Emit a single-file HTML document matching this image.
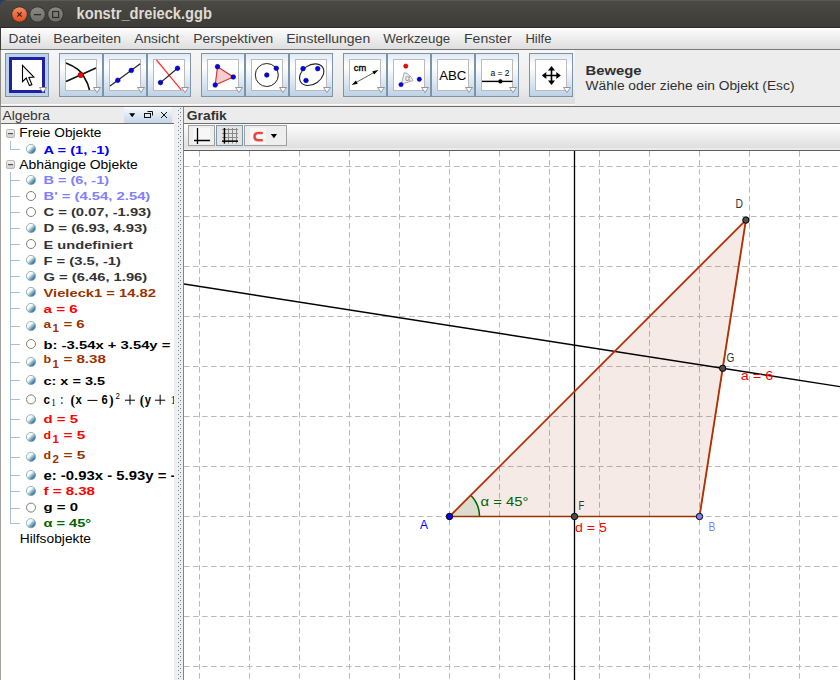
<!DOCTYPE html>
<html><head><meta charset="utf-8"><style>
html,body{margin:0;padding:0;background:#fff;overflow:hidden;}
svg{display:block;}
</style></head><body>
<svg width="840" height="680" viewBox="0 0 840 680">

<defs>
<linearGradient id="gTitle" x1="0" y1="0" x2="0" y2="1"><stop offset="0" stop-color="#4b4a45"/><stop offset="1" stop-color="#3c3b37"/></linearGradient>
<linearGradient id="gMenu" x1="0" y1="0" x2="0" y2="1"><stop offset="0" stop-color="#fdfdfd"/><stop offset="1" stop-color="#dedede"/></linearGradient>
<linearGradient id="gClose" x1="0" y1="0" x2="0" y2="1"><stop offset="0" stop-color="#f58a62"/><stop offset="1" stop-color="#e2501d"/></linearGradient>
<linearGradient id="gWin" x1="0" y1="0" x2="0" y2="1"><stop offset="0" stop-color="#8a8984"/><stop offset="1" stop-color="#6e6d69"/></linearGradient>
<linearGradient id="gBtn" x1="0" y1="0" x2="0" y2="1"><stop offset="0" stop-color="#dfe8f1"/><stop offset="0.3" stop-color="#ffffff"/><stop offset="1" stop-color="#bcd1e6"/></linearGradient>
<linearGradient id="gTb" x1="0" y1="0" x2="0" y2="1"><stop offset="0" stop-color="#f6f6f6"/><stop offset="0.7" stop-color="#ebebeb"/><stop offset="1" stop-color="#dcdcdc"/></linearGradient>
<linearGradient id="gHdrBtn" x1="0" y1="0" x2="0" y2="1"><stop offset="0" stop-color="#f8fbfd"/><stop offset="1" stop-color="#c3d6ea"/></linearGradient>
<linearGradient id="gGtb" x1="0" y1="0" x2="0" y2="1"><stop offset="0" stop-color="#fefefe"/><stop offset="1" stop-color="#dcdcdc"/></linearGradient>
<linearGradient id="gCollapse" x1="0" y1="0" x2="0" y2="1"><stop offset="0" stop-color="#f4f4f4"/><stop offset="1" stop-color="#cfcfcf"/></linearGradient>
<linearGradient id="gBall" x1="0.15" y1="0.15" x2="0.85" y2="0.85"><stop offset="0" stop-color="#ffffff"/><stop offset="0.35" stop-color="#f4f8f4"/><stop offset="0.5" stop-color="#b9d3c4"/><stop offset="0.75" stop-color="#5f97c2"/><stop offset="1" stop-color="#2c5d8e"/></linearGradient>
<clipPath id="clipAlg"><rect x="0" y="124" width="174" height="556"/></clipPath>
<pattern id="pDots" x="174" y="0" width="9" height="4" patternUnits="userSpaceOnUse"><rect x="0" y="0" width="9" height="4" fill="#eeeeee"/><rect x="4" y="2" width="1" height="1" fill="#71839a"/><rect x="6" y="0" width="1" height="1" fill="#71839a"/></pattern>
</defs>

<rect x="0" y="0" width="840" height="680" fill="#ffffff"/>
<rect x="0" y="0" width="840" height="28" fill="#1e3e6b"/>
<path d="M0,28 L0,6 A6,6 0 0 1 6,0 L840,0 L840,28 Z" fill="url(#gTitle)"/>
<rect x="0" y="27" width="840" height="1" fill="#2c2b28"/>
<rect x="6" y="0" width="834" height="1" fill="#5a5954"/>
<circle cx="19.5" cy="14.5" r="7.9" fill="#2e2d2a"/>
<circle cx="19.5" cy="14.5" r="7.3" fill="url(#gClose)"/>
<path d="M17.3,12.3 L21.7,16.7 M21.7,12.3 L17.3,16.7" stroke="#3a1a0e" stroke-width="1.1"/>
<circle cx="37.5" cy="14.5" r="7.9" fill="#2e2d2a"/>
<circle cx="37.5" cy="14.5" r="7.3" fill="url(#gWin)"/>
<rect x="34" y="14" width="7" height="1.3" fill="#2f2e2b"/>
<circle cx="55.5" cy="14.5" r="7.9" fill="#2e2d2a"/>
<circle cx="55.5" cy="14.5" r="7.3" fill="url(#gWin)"/>
<rect x="52.6" y="11.5" width="6" height="6" fill="none" stroke="#2f2e2b" stroke-width="1.2"/>
<text x="76.5" y="18.9" font-size="16.5" font-weight="bold" fill="#dfdbd2" font-family='"Liberation Sans", sans-serif' textLength="135.5" lengthAdjust="spacingAndGlyphs" >konstr_dreieck.ggb</text>
<rect x="0" y="28" width="840" height="21" fill="url(#gMenu)"/>
<rect x="0" y="49" width="840" height="1" fill="#7a7a7a"/>
<text x="8.5" y="42.6" font-size="12" font-weight="normal" fill="#3c3c3c" font-family='"Liberation Sans", sans-serif' textLength="32.2" lengthAdjust="spacingAndGlyphs" >Datei</text>
<text x="53.3" y="42.6" font-size="12" font-weight="normal" fill="#3c3c3c" font-family='"Liberation Sans", sans-serif' textLength="67.7" lengthAdjust="spacingAndGlyphs" >Bearbeiten</text>
<text x="134.3" y="42.6" font-size="12" font-weight="normal" fill="#3c3c3c" font-family='"Liberation Sans", sans-serif' textLength="45" lengthAdjust="spacingAndGlyphs" >Ansicht</text>
<text x="193.3" y="42.6" font-size="12" font-weight="normal" fill="#3c3c3c" font-family='"Liberation Sans", sans-serif' textLength="80" lengthAdjust="spacingAndGlyphs" >Perspektiven</text>
<text x="286.2" y="42.6" font-size="12" font-weight="normal" fill="#3c3c3c" font-family='"Liberation Sans", sans-serif' textLength="84" lengthAdjust="spacingAndGlyphs" >Einstellungen</text>
<text x="383.2" y="42.6" font-size="12" font-weight="normal" fill="#3c3c3c" font-family='"Liberation Sans", sans-serif' textLength="67" lengthAdjust="spacingAndGlyphs" >Werkzeuge</text>
<text x="464" y="42.6" font-size="12" font-weight="normal" fill="#3c3c3c" font-family='"Liberation Sans", sans-serif' textLength="47.6" lengthAdjust="spacingAndGlyphs" >Fenster</text>
<text x="525.4" y="42.6" font-size="12" font-weight="normal" fill="#3c3c3c" font-family='"Liberation Sans", sans-serif' textLength="26" lengthAdjust="spacingAndGlyphs" >Hilfe</text>
<rect x="0" y="50" width="840" height="56" fill="#ededed"/>
<rect x="0" y="50" width="575" height="54" fill="url(#gTb)"/>
<rect x="0" y="104" width="575" height="1" fill="#fafafa"/>
<rect x="0" y="106" width="840" height="1" fill="#6a6a6a"/>
<rect x="5.5" y="53.5" width="43" height="43" fill="#bcd2e8" stroke="#7d93a8" stroke-width="1"/>
<rect x="59.5" y="53.5" width="43" height="43" fill="url(#gBtn)" stroke="#7d93a8" stroke-width="1"/>
<rect x="65.5" y="59.5" width="31" height="31" fill="#ffffff" stroke="#bababa" stroke-width="1"/>
<rect x="103.5" y="53.5" width="43" height="43" fill="url(#gBtn)" stroke="#7d93a8" stroke-width="1"/>
<rect x="109.5" y="59.5" width="31" height="31" fill="#ffffff" stroke="#bababa" stroke-width="1"/>
<rect x="147.5" y="53.5" width="43" height="43" fill="url(#gBtn)" stroke="#7d93a8" stroke-width="1"/>
<rect x="153.5" y="59.5" width="31" height="31" fill="#ffffff" stroke="#bababa" stroke-width="1"/>
<rect x="201.5" y="53.5" width="43" height="43" fill="url(#gBtn)" stroke="#7d93a8" stroke-width="1"/>
<rect x="207.5" y="59.5" width="31" height="31" fill="#ffffff" stroke="#bababa" stroke-width="1"/>
<rect x="245.5" y="53.5" width="43" height="43" fill="url(#gBtn)" stroke="#7d93a8" stroke-width="1"/>
<rect x="251.5" y="59.5" width="31" height="31" fill="#ffffff" stroke="#bababa" stroke-width="1"/>
<rect x="289.5" y="53.5" width="43" height="43" fill="url(#gBtn)" stroke="#7d93a8" stroke-width="1"/>
<rect x="295.5" y="59.5" width="31" height="31" fill="#ffffff" stroke="#bababa" stroke-width="1"/>
<rect x="343.5" y="53.5" width="43" height="43" fill="url(#gBtn)" stroke="#7d93a8" stroke-width="1"/>
<rect x="349.5" y="59.5" width="31" height="31" fill="#ffffff" stroke="#bababa" stroke-width="1"/>
<rect x="387.5" y="53.5" width="43" height="43" fill="url(#gBtn)" stroke="#7d93a8" stroke-width="1"/>
<rect x="393.5" y="59.5" width="31" height="31" fill="#ffffff" stroke="#bababa" stroke-width="1"/>
<rect x="431.5" y="53.5" width="43" height="43" fill="url(#gBtn)" stroke="#7d93a8" stroke-width="1"/>
<rect x="437.5" y="59.5" width="31" height="31" fill="#ffffff" stroke="#bababa" stroke-width="1"/>
<rect x="475.5" y="53.5" width="43" height="43" fill="url(#gBtn)" stroke="#7d93a8" stroke-width="1"/>
<rect x="481.5" y="59.5" width="31" height="31" fill="#ffffff" stroke="#bababa" stroke-width="1"/>
<rect x="529.5" y="53.5" width="43" height="43" fill="url(#gBtn)" stroke="#7d93a8" stroke-width="1"/>
<rect x="535.5" y="59.5" width="31" height="31" fill="#ffffff" stroke="#bababa" stroke-width="1"/>
<rect x="10.5" y="58.5" width="33" height="33" fill="#ffffff" stroke="#2020a2" stroke-width="3"/>
<path d="M22.5,65.3 L22.5,81.6 L26.2,78 L29.4,85.6 L31.9,84.6 L28.9,77.4 L33.9,77 Z" fill="#ffffff" stroke="#000" stroke-width="1.1" stroke-linejoin="miter"/>
<path d="M39.5,87.5 L46.5,87.5 L43,92.5 Z" fill="#ffffff" stroke="#8a8a8a" stroke-width="0.9"/>
<path d="M66,63 Q81,69 84,77 Q88,83 89.5,90" fill="none" stroke="#111" stroke-width="1.6"/>
<path d="M66,81.5 L96,68" fill="none" stroke="#111" stroke-width="1.6"/>
<circle cx="80.8" cy="75" r="2.7" fill="#ff0000" stroke="#550000" stroke-width="0.6"/>
<path d="M93.5,87.5 L100.5,87.5 L97,92.5 Z" fill="#ffffff" stroke="#8a8a8a" stroke-width="0.9"/>
<path d="M110,86 L140.2,63.8" stroke="#222" stroke-width="1.2"/>
<circle cx="117.8" cy="80.3" r="2.35" fill="#0000ff" stroke="#000033" stroke-width="0.5"/>
<circle cx="131.3" cy="70.4" r="2.35" fill="#0000ff" stroke="#000033" stroke-width="0.5"/>
<path d="M137.5,87.5 L144.5,87.5 L141,92.5 Z" fill="#ffffff" stroke="#8a8a8a" stroke-width="0.9"/>
<path d="M156.5,60 L181.2,89.8" stroke="#ff3030" stroke-width="1.2"/>
<path d="M160.5,82.6 L177.5,68.3" stroke="#222" stroke-width="1.2"/>
<circle cx="160.5" cy="82.6" r="2.35" fill="#0000ff" stroke="#000033" stroke-width="0.5"/>
<circle cx="177.5" cy="68.3" r="2.35" fill="#0000ff" stroke="#000033" stroke-width="0.5"/>
<path d="M181.5,87.5 L188.5,87.5 L185,92.5 Z" fill="#ffffff" stroke="#8a8a8a" stroke-width="0.9"/>
<path d="M217.5,66.7 L233.3,77 L215.2,85 Z" fill="#f2d0d0" stroke="#e03030" stroke-width="1.2"/>
<circle cx="217.5" cy="66.7" r="2.35" fill="#0000ff" stroke="#000033" stroke-width="0.5"/>
<circle cx="233.3" cy="77" r="2.35" fill="#0000ff" stroke="#000033" stroke-width="0.5"/>
<circle cx="215.2" cy="85" r="2.35" fill="#0000ff" stroke="#000033" stroke-width="0.5"/>
<path d="M235.5,87.5 L242.5,87.5 L239,92.5 Z" fill="#ffffff" stroke="#8a8a8a" stroke-width="0.9"/>
<circle cx="266.8" cy="75" r="11.5" fill="none" stroke="#222" stroke-width="1"/>
<circle cx="266.8" cy="75" r="2.35" fill="#0000ff" stroke="#000033" stroke-width="0.5"/>
<circle cx="276.3" cy="68.3" r="2.35" fill="#0000ff" stroke="#000033" stroke-width="0.5"/>
<path d="M279.5,87.5 L286.5,87.5 L283,92.5 Z" fill="#ffffff" stroke="#8a8a8a" stroke-width="0.9"/>
<ellipse cx="311.7" cy="74.7" rx="13.2" ry="9.5" transform="rotate(-35 311.7 74.7)" fill="none" stroke="#222" stroke-width="1.1"/>
<circle cx="303" cy="68.7" r="2.35" fill="#0000ff" stroke="#000033" stroke-width="0.5"/>
<circle cx="317.7" cy="68.7" r="2.35" fill="#0000ff" stroke="#000033" stroke-width="0.5"/>
<circle cx="306" cy="80.5" r="2.35" fill="#0000ff" stroke="#000033" stroke-width="0.5"/>
<path d="M323.5,87.5 L330.5,87.5 L327,92.5 Z" fill="#ffffff" stroke="#8a8a8a" stroke-width="0.9"/>
<text x="353.8" y="71" font-size="9.5" font-weight="normal" fill="#000" font-family='"Liberation Sans", sans-serif' textLength="12.4" lengthAdjust="spacingAndGlyphs" stroke="#000" stroke-width="0.35">cm</text>
<path d="M355,83.1 L375,71.9" stroke="#333" stroke-width="0.8"/>
<path d="M351.6,85 L357.8,83.7 L355.9,80.5 Z M378.4,70 L374.1,74.5 L372.3,71.3 Z" fill="#000"/>
<path d="M377.5,87.5 L384.5,87.5 L381,92.5 Z" fill="#ffffff" stroke="#8a8a8a" stroke-width="0.9"/>
<path d="M401.5,84 L404.2,72.6 A12.5,12.5 0 0 1 412.9,80.6 Z" fill="#f2f2f2" stroke="#a8a8a8" stroke-width="1"/>
<text x="405" y="81.3" font-size="8.5" font-weight="normal" fill="#8a8a8a" font-family='"Liberation Sans", sans-serif' textLength="5.2" lengthAdjust="spacingAndGlyphs" >α</text>
<circle cx="405.8" cy="66.1" r="2.2" fill="#ff0000" stroke="#440000" stroke-width="0.4"/>
<circle cx="401" cy="84.6" r="2.2" fill="#0000ff" stroke="#000044" stroke-width="0.4"/>
<circle cx="419.3" cy="79.2" r="2.2" fill="#0000ff" stroke="#000044" stroke-width="0.4"/>
<path d="M421.5,87.5 L428.5,87.5 L425,92.5 Z" fill="#ffffff" stroke="#8a8a8a" stroke-width="0.9"/>
<text x="439.2" y="79.7" font-size="13.3" font-weight="normal" fill="#000" font-family='"Liberation Sans", sans-serif' textLength="27.2" lengthAdjust="spacingAndGlyphs" >ABC</text>
<path d="M465.5,87.5 L472.5,87.5 L469,92.5 Z" fill="#ffffff" stroke="#8a8a8a" stroke-width="0.9"/>
<text x="490.5" y="75.8" font-size="9" font-weight="normal" fill="#000" font-family='"Liberation Sans", sans-serif' textLength="19" lengthAdjust="spacingAndGlyphs" >a = 2</text>
<rect x="482" y="80.7" width="30.5" height="1.4" fill="#000"/>
<circle cx="500.4" cy="81.4" r="2.1" fill="#000"/>
<path d="M509.5,87.5 L516.5,87.5 L513,92.5 Z" fill="#ffffff" stroke="#8a8a8a" stroke-width="0.9"/>
<path d="M551.5,68 L551.5,83 M544,75.5 L559,75.5" stroke="#000" stroke-width="1.6"/>
<path d="M551.5,66 L548,70.5 L555,70.5 Z M551.5,85.1 L548,80.6 L555,80.6 Z M541.8,75.5 L546.3,72 L546.3,79 Z M560.8,75.5 L556.3,72 L556.3,79 Z" fill="#000"/>
<path d="M563.5,87.5 L570.5,87.5 L567,92.5 Z" fill="#ffffff" stroke="#8a8a8a" stroke-width="0.9"/>
<text x="585.5" y="75" font-size="12" font-weight="bold" fill="#303030" font-family='"Liberation Sans", sans-serif' textLength="56" lengthAdjust="spacingAndGlyphs" >Bewege</text>
<text x="585.5" y="89.8" font-size="12" font-weight="normal" fill="#303030" font-family='"Liberation Sans", sans-serif' textLength="209" lengthAdjust="spacingAndGlyphs" >Wähle oder ziehe ein Objekt (Esc)</text>
<rect x="0" y="107" width="840" height="16" fill="#ececec"/>
<rect x="1" y="123" width="173" height="1" fill="#6e6e6e"/>
<rect x="124" y="107" width="48" height="16" fill="url(#gHdrBtn)"/>
<text x="2.5" y="120" font-size="12.5" font-weight="normal" fill="#333" font-family='"Liberation Sans", sans-serif' textLength="47.5" lengthAdjust="spacingAndGlyphs" >Algebra</text>
<path d="M129.2,113.2 L135.2,113.2 L132.2,117.2 Z" fill="#000"/>
<rect x="144.5" y="113.5" width="6" height="4" fill="none" stroke="#111" stroke-width="1"/>
<path d="M147.5,111.5 L152.5,111.5 L152.5,115.5" fill="none" stroke="#111" stroke-width="1"/>
<path d="M161,112 L167,118 M167,112 L161,118" stroke="#111" stroke-width="1"/>
<rect x="174" y="107" width="9" height="573" fill="url(#pDots)"/>
<rect x="183" y="107" width="1" height="573" fill="#74889c"/>
<text x="186.8" y="119.5" font-size="12.5" font-weight="bold" fill="#333" font-family='"Liberation Sans", sans-serif' textLength="40" lengthAdjust="spacingAndGlyphs" >Grafik</text>
<rect x="184" y="124" width="656" height="26" fill="url(#gGtb)"/>
<rect x="184" y="123" width="656" height="1" fill="#6e6e6e"/>
<rect x="184" y="148" width="656" height="2" fill="#ebebeb"/>
<rect x="184" y="150" width="656" height="1" fill="#5e5e5e"/>
<rect x="188.5" y="125.5" width="26" height="20" fill="#eeeeee" stroke="#a0a0a0" stroke-width="1"/>
<rect x="193.5" y="128" width="16.5" height="15.8" fill="#f7f7f7"/>
<path d="M197.5,128 L197.5,144 M194,140.5 L210,140.5" stroke="#000" stroke-width="1.3"/>
<rect x="216.5" y="125.5" width="26" height="20" fill="#e4e4e4" stroke="#7f97ad" stroke-width="1"/>
<rect x="228.0" y="128" width="1" height="15.5" fill="#8a8a8a"/>
<rect x="232.0" y="128" width="1" height="15.5" fill="#8a8a8a"/>
<rect x="236.0" y="128" width="1" height="15.5" fill="#8a8a8a"/>
<rect x="222" y="129.0" width="16" height="1" fill="#8a8a8a"/>
<rect x="222" y="133.0" width="16" height="1" fill="#8a8a8a"/>
<rect x="222" y="137.0" width="16" height="1" fill="#8a8a8a"/>
<rect x="223.7" y="128" width="1.5" height="15.6" fill="#000"/>
<rect x="222" y="140.4" width="16" height="1.5" fill="#000"/>
<rect x="244.5" y="125.5" width="42" height="20" fill="#eeeeee" stroke="#a0a0a0" stroke-width="1"/>
<rect x="250" y="128" width="16" height="16" fill="#f7f7f7"/>
<path d="M261.8,133 L258.2,133 Q254.5,133 254.5,136.6 Q254.5,140.2 258.2,140.2 L261.8,140.2" fill="none" stroke="#e84848" stroke-width="2.5" stroke-linecap="round"/>
<path d="M270.8,134 L277,134 L273.9,138.2 Z" fill="#000"/>
<rect x="0" y="124" width="174" height="556" fill="#ffffff"/>
<rect x="0" y="28" width="1" height="22" fill="#3c3b37"/>
<rect x="0" y="50" width="1" height="57" fill="#8a8a86"/>
<rect x="0" y="107" width="1" height="573" fill="#a3a09a"/>
<rect x="1" y="28" width="839" height="1" fill="#ffffff" fill-opacity="0.7"/>
<rect x="6.5" y="129.5" width="8" height="8" rx="1.5" fill="url(#gCollapse)" stroke="#b8b8b8" stroke-width="1"/>
<rect x="8" y="133" width="5" height="1.2" fill="#555"/>
<text x="19.3" y="137.4" font-size="12" font-weight="normal" fill="#000" font-family='"Liberation Sans", sans-serif' textLength="82.1" lengthAdjust="spacingAndGlyphs" >Freie Objekte</text>
<rect x="6.5" y="160.5" width="8" height="8" rx="1.5" fill="url(#gCollapse)" stroke="#b8b8b8" stroke-width="1"/>
<rect x="8" y="164" width="5" height="1.2" fill="#555"/>
<text x="19.3" y="168.6" font-size="12" font-weight="normal" fill="#000" font-family='"Liberation Sans", sans-serif' textLength="118.5" lengthAdjust="spacingAndGlyphs" >Abhängige Objekte</text>
<text x="19.7" y="542.5" font-size="12" font-weight="normal" fill="#000" font-family='"Liberation Sans", sans-serif' textLength="71.3" lengthAdjust="spacingAndGlyphs" >Hilfsobjekte</text>
<rect x="10" y="141" width="1" height="9" fill="#a9bfd6"/>
<rect x="10" y="149" width="10" height="1" fill="#a9bfd6"/>
<rect x="10" y="172" width="1" height="352" fill="#a9bfd6"/>
<circle cx="31" cy="149" r="4.6" fill="url(#gBall)" stroke="#7fa2bf" stroke-width="0.8"/>
<text x="43.5" y="153.9" font-size="11.6" font-weight="bold" fill="#0000ff" font-family='"Liberation Sans", sans-serif' textLength="65.8" lengthAdjust="spacingAndGlyphs" >A = (1, -1)</text>
<rect x="11" y="180" width="9" height="1" fill="#a9bfd6"/>
<circle cx="31" cy="180" r="4.6" fill="url(#gBall)" stroke="#7fa2bf" stroke-width="0.8"/>
<text x="43.5" y="184.3" font-size="11.6" font-weight="bold" fill="#7f7fff" font-family='"Liberation Sans", sans-serif' textLength="65.5" lengthAdjust="spacingAndGlyphs" >B = (6, -1)</text>
<rect x="11" y="196" width="9" height="1" fill="#a9bfd6"/>
<circle cx="31" cy="196" r="4.5" fill="#ffffff" stroke="#80806c" stroke-width="1"/>
<text x="43.5" y="200.3" font-size="11.6" font-weight="bold" fill="#7f7fff" font-family='"Liberation Sans", sans-serif' textLength="106.8" lengthAdjust="spacingAndGlyphs" >B' = (4.54, 2.54)</text>
<rect x="11" y="212" width="9" height="1" fill="#a9bfd6"/>
<circle cx="31" cy="212" r="4.5" fill="#ffffff" stroke="#80806c" stroke-width="1"/>
<text x="43.5" y="216.4" font-size="11.6" font-weight="bold" fill="#333333" font-family='"Liberation Sans", sans-serif' textLength="107.7" lengthAdjust="spacingAndGlyphs" >C = (0.07, -1.93)</text>
<rect x="11" y="228" width="9" height="1" fill="#a9bfd6"/>
<circle cx="31" cy="228" r="4.6" fill="url(#gBall)" stroke="#7fa2bf" stroke-width="0.8"/>
<text x="43.5" y="232.4" font-size="11.6" font-weight="bold" fill="#333333" font-family='"Liberation Sans", sans-serif' textLength="103.7" lengthAdjust="spacingAndGlyphs" >D = (6.93, 4.93)</text>
<rect x="11" y="244" width="9" height="1" fill="#a9bfd6"/>
<circle cx="31" cy="244" r="4.5" fill="#ffffff" stroke="#80806c" stroke-width="1"/>
<text x="43.5" y="248.5" font-size="11.6" font-weight="bold" fill="#333333" font-family='"Liberation Sans", sans-serif' textLength="89.5" lengthAdjust="spacingAndGlyphs" >E undefiniert</text>
<rect x="11" y="260" width="9" height="1" fill="#a9bfd6"/>
<circle cx="31" cy="260" r="4.6" fill="url(#gBall)" stroke="#7fa2bf" stroke-width="0.8"/>
<text x="43.5" y="264.6" font-size="11.6" font-weight="bold" fill="#333333" font-family='"Liberation Sans", sans-serif' textLength="77.5" lengthAdjust="spacingAndGlyphs" >F = (3.5, -1)</text>
<rect x="11" y="276" width="9" height="1" fill="#a9bfd6"/>
<circle cx="31" cy="276" r="4.6" fill="url(#gBall)" stroke="#7fa2bf" stroke-width="0.8"/>
<text x="43.5" y="280.6" font-size="11.6" font-weight="bold" fill="#333333" font-family='"Liberation Sans", sans-serif' textLength="103.7" lengthAdjust="spacingAndGlyphs" >G = (6.46, 1.96)</text>
<rect x="11" y="292" width="9" height="1" fill="#a9bfd6"/>
<circle cx="31" cy="292" r="4.6" fill="url(#gBall)" stroke="#7fa2bf" stroke-width="0.8"/>
<text x="43.5" y="296.7" font-size="11.6" font-weight="bold" fill="#993300" font-family='"Liberation Sans", sans-serif' textLength="112.4" lengthAdjust="spacingAndGlyphs" >Vieleck1 = 14.82</text>
<rect x="11" y="308" width="9" height="1" fill="#a9bfd6"/>
<circle cx="31" cy="308" r="4.6" fill="url(#gBall)" stroke="#7fa2bf" stroke-width="0.8"/>
<text x="43.5" y="312.8" font-size="11.6" font-weight="bold" fill="#ff0000" font-family='"Liberation Sans", sans-serif' textLength="34.2" lengthAdjust="spacingAndGlyphs" >a = 6</text>
<rect x="11" y="326" width="9" height="1" fill="#a9bfd6"/>
<circle cx="31" cy="326" r="4.6" fill="url(#gBall)" stroke="#7fa2bf" stroke-width="0.8"/>
<text x="43.5" y="327.6" font-size="11.6" font-weight="bold" fill="#993300" font-family='"Liberation Sans", sans-serif' textLength="7.6" lengthAdjust="spacingAndGlyphs" >a</text>
<text x="52.6" y="332.40000000000003" font-size="10.5" font-weight="bold" fill="#993300" font-family='"Liberation Sans", sans-serif' textLength="6.4" lengthAdjust="spacingAndGlyphs" >1</text>
<text x="63.4" y="327.6" font-size="11.6" font-weight="bold" fill="#993300" font-family='"Liberation Sans", sans-serif' textLength="21.3" lengthAdjust="spacingAndGlyphs" > = 6</text>
<rect x="11" y="344" width="9" height="1" fill="#a9bfd6"/>
<circle cx="31" cy="344" r="4.5" fill="#ffffff" stroke="#80806c" stroke-width="1"/>
<text x="43.5" y="349" font-size="11.6" font-weight="bold" fill="#000000" font-family='"Liberation Sans", sans-serif' textLength="126.9" lengthAdjust="spacingAndGlyphs" >b: -3.54x + 3.54y =</text>
<rect x="11" y="362" width="9" height="1" fill="#a9bfd6"/>
<circle cx="31" cy="362" r="4.6" fill="url(#gBall)" stroke="#7fa2bf" stroke-width="0.8"/>
<text x="43.5" y="363.1" font-size="11.6" font-weight="bold" fill="#993300" font-family='"Liberation Sans", sans-serif' textLength="7.6" lengthAdjust="spacingAndGlyphs" >b</text>
<text x="52.6" y="368.1" font-size="10.5" font-weight="bold" fill="#993300" font-family='"Liberation Sans", sans-serif' textLength="6.4" lengthAdjust="spacingAndGlyphs" >1</text>
<text x="63.4" y="363.1" font-size="11.6" font-weight="bold" fill="#993300" font-family='"Liberation Sans", sans-serif' textLength="42.5" lengthAdjust="spacingAndGlyphs" > = 8.38</text>
<rect x="11" y="380" width="9" height="1" fill="#a9bfd6"/>
<circle cx="31" cy="380" r="4.6" fill="url(#gBall)" stroke="#7fa2bf" stroke-width="0.8"/>
<text x="43.5" y="384.6" font-size="11.6" font-weight="bold" fill="#000000" font-family='"Liberation Sans", sans-serif' textLength="61.5" lengthAdjust="spacingAndGlyphs" >c: x = 3.5</text>
<rect x="11" y="399" width="9" height="1" fill="#a9bfd6"/>
<circle cx="31" cy="399.4" r="4.5" fill="#ffffff" stroke="#80806c" stroke-width="1"/>
<g clip-path="url(#clipAlg)">
<text x="43.5" y="404.3" font-size="12" font-weight="bold" fill="#000" font-family='"Liberation Sans", sans-serif' textLength="6.5" lengthAdjust="spacingAndGlyphs" >c</text>
<text x="51.2" y="406.3" font-size="10" font-weight="normal" fill="#000" font-family='"Liberation Serif", serif' textLength="4.6" lengthAdjust="spacingAndGlyphs" >1</text>
<text x="60.6" y="404.3" font-size="12" font-weight="bold" fill="#000" font-family='"Liberation Sans", sans-serif' textLength="2.6" lengthAdjust="spacingAndGlyphs" >:</text>
<text x="70.5" y="404.8" font-size="14.5" font-weight="bold" fill="#000" font-family='"Liberation Serif", serif' textLength="4.6" lengthAdjust="spacingAndGlyphs" >(</text>
<text x="75.6" y="404.3" font-size="12" font-weight="bold" fill="#000" font-family='"Liberation Sans", sans-serif' textLength="6.3" lengthAdjust="spacingAndGlyphs" >x</text>
<rect x="87.5" y="399.90000000000003" width="10" height="1" fill="#000"/>
<text x="101.5" y="404.3" font-size="12" font-weight="bold" fill="#000" font-family='"Liberation Sans", sans-serif' textLength="6.2" lengthAdjust="spacingAndGlyphs" >6</text>
<text x="108.9" y="404.8" font-size="14.5" font-weight="bold" fill="#000" font-family='"Liberation Serif", serif' textLength="4.6" lengthAdjust="spacingAndGlyphs" >)</text>
<text x="115.6" y="398.8" font-size="9" font-weight="normal" fill="#000" font-family='"Liberation Sans", sans-serif' textLength="4.4" lengthAdjust="spacingAndGlyphs" >2</text>
<rect x="125" y="399.7" width="10" height="1" fill="#000"/><rect x="129.5" y="394.7" width="1" height="10" fill="#000"/>
<text x="139.8" y="404.8" font-size="14.5" font-weight="bold" fill="#000" font-family='"Liberation Serif", serif' textLength="4.6" lengthAdjust="spacingAndGlyphs" >(</text>
<text x="144.8" y="404.3" font-size="12" font-weight="bold" fill="#000" font-family='"Liberation Sans", sans-serif' textLength="6.2" lengthAdjust="spacingAndGlyphs" >y</text>
<rect x="155" y="399.7" width="10.3" height="1" fill="#000"/><rect x="159.65" y="394.7" width="1" height="10" fill="#000"/>
<text x="170.5" y="404.3" font-size="12" font-weight="normal" fill="#000" font-family='"Liberation Serif", serif' textLength="6" lengthAdjust="spacingAndGlyphs" >1</text>
</g>
<rect x="11" y="419" width="9" height="1" fill="#a9bfd6"/>
<circle cx="31" cy="419.3" r="4.6" fill="url(#gBall)" stroke="#7fa2bf" stroke-width="0.8"/>
<text x="43.5" y="423.1" font-size="11.6" font-weight="bold" fill="#ff0000" font-family='"Liberation Sans", sans-serif' textLength="34.5" lengthAdjust="spacingAndGlyphs" >d = 5</text>
<rect x="11" y="437" width="9" height="1" fill="#a9bfd6"/>
<circle cx="31" cy="437" r="4.6" fill="url(#gBall)" stroke="#7fa2bf" stroke-width="0.8"/>
<text x="43.5" y="438.6" font-size="11.6" font-weight="bold" fill="#ff0000" font-family='"Liberation Sans", sans-serif' textLength="7.6" lengthAdjust="spacingAndGlyphs" >d</text>
<text x="52.6" y="443.40000000000003" font-size="10.5" font-weight="bold" fill="#ff0000" font-family='"Liberation Sans", sans-serif' textLength="6.4" lengthAdjust="spacingAndGlyphs" >1</text>
<text x="63.4" y="438.6" font-size="11.6" font-weight="bold" fill="#ff0000" font-family='"Liberation Sans", sans-serif' textLength="21.9" lengthAdjust="spacingAndGlyphs" > = 5</text>
<rect x="11" y="457" width="9" height="1" fill="#a9bfd6"/>
<circle cx="31" cy="456.8" r="4.6" fill="url(#gBall)" stroke="#7fa2bf" stroke-width="0.8"/>
<text x="43.5" y="458.5" font-size="11.6" font-weight="bold" fill="#993300" font-family='"Liberation Sans", sans-serif' textLength="7.6" lengthAdjust="spacingAndGlyphs" >d</text>
<text x="52.6" y="463.3" font-size="10.5" font-weight="bold" fill="#993300" font-family='"Liberation Sans", sans-serif' textLength="6.4" lengthAdjust="spacingAndGlyphs" >2</text>
<text x="63.4" y="458.5" font-size="11.6" font-weight="bold" fill="#993300" font-family='"Liberation Sans", sans-serif' textLength="21.9" lengthAdjust="spacingAndGlyphs" > = 5</text>
<rect x="11" y="475" width="9" height="1" fill="#a9bfd6"/>
<circle cx="31" cy="475" r="4.6" fill="url(#gBall)" stroke="#7fa2bf" stroke-width="0.8"/>
<g clip-path="url(#clipAlg)">
<text x="43.5" y="479.7" font-size="12" font-weight="bold" fill="#000000" font-family='"Liberation Sans", sans-serif' textLength="132" lengthAdjust="spacingAndGlyphs" >e: -0.93x - 5.93y = -</text>
</g>
<rect x="11" y="491" width="9" height="1" fill="#a9bfd6"/>
<circle cx="31" cy="491" r="4.6" fill="url(#gBall)" stroke="#7fa2bf" stroke-width="0.8"/>
<text x="43.5" y="495.4" font-size="11.6" font-weight="bold" fill="#ff0000" font-family='"Liberation Sans", sans-serif' textLength="51.5" lengthAdjust="spacingAndGlyphs" >f = 8.38</text>
<rect x="11" y="508" width="9" height="1" fill="#a9bfd6"/>
<circle cx="31" cy="507.6" r="4.5" fill="#ffffff" stroke="#80806c" stroke-width="1"/>
<text x="43.5" y="511.4" font-size="11.6" font-weight="bold" fill="#000000" font-family='"Liberation Sans", sans-serif' textLength="34.5" lengthAdjust="spacingAndGlyphs" >g = 0</text>
<rect x="11" y="523" width="9" height="1" fill="#a9bfd6"/>
<circle cx="31" cy="523.2" r="4.6" fill="url(#gBall)" stroke="#7fa2bf" stroke-width="0.8"/>
<text x="43.5" y="526.9" font-size="11.6" font-weight="bold" fill="#006400" font-family='"Liberation Sans", sans-serif' textLength="47.7" lengthAdjust="spacingAndGlyphs" >α = 45°</text>
<clipPath id="clipG"><rect x="184" y="151" width="656" height="529"/></clipPath>
<g clip-path="url(#clipG)">
<rect x="184" y="151" width="656" height="529" fill="#ffffff"/>
<line x1="199.5" y1="151" x2="199.5" y2="680" stroke="#bababa" stroke-width="1" stroke-dasharray="5.6 3.4"/>
<line x1="249.5" y1="151" x2="249.5" y2="680" stroke="#bababa" stroke-width="1" stroke-dasharray="5.6 3.4"/>
<line x1="299.5" y1="151" x2="299.5" y2="680" stroke="#bababa" stroke-width="1" stroke-dasharray="5.6 3.4"/>
<line x1="349.5" y1="151" x2="349.5" y2="680" stroke="#bababa" stroke-width="1" stroke-dasharray="5.6 3.4"/>
<line x1="399.5" y1="151" x2="399.5" y2="680" stroke="#bababa" stroke-width="1" stroke-dasharray="5.6 3.4"/>
<line x1="449.5" y1="151" x2="449.5" y2="680" stroke="#bababa" stroke-width="1" stroke-dasharray="5.6 3.4"/>
<line x1="499.5" y1="151" x2="499.5" y2="680" stroke="#bababa" stroke-width="1" stroke-dasharray="5.6 3.4"/>
<line x1="549.5" y1="151" x2="549.5" y2="680" stroke="#bababa" stroke-width="1" stroke-dasharray="5.6 3.4"/>
<line x1="599.5" y1="151" x2="599.5" y2="680" stroke="#bababa" stroke-width="1" stroke-dasharray="5.6 3.4"/>
<line x1="649.5" y1="151" x2="649.5" y2="680" stroke="#bababa" stroke-width="1" stroke-dasharray="5.6 3.4"/>
<line x1="699.5" y1="151" x2="699.5" y2="680" stroke="#bababa" stroke-width="1" stroke-dasharray="5.6 3.4"/>
<line x1="749.5" y1="151" x2="749.5" y2="680" stroke="#bababa" stroke-width="1" stroke-dasharray="5.6 3.4"/>
<line x1="799.5" y1="151" x2="799.5" y2="680" stroke="#bababa" stroke-width="1" stroke-dasharray="5.6 3.4"/>
<line x1="184" y1="166.5" x2="840" y2="166.5" stroke="#bababa" stroke-width="1" stroke-dasharray="5.6 3.4"/>
<line x1="184" y1="216.5" x2="840" y2="216.5" stroke="#bababa" stroke-width="1" stroke-dasharray="5.6 3.4"/>
<line x1="184" y1="266.5" x2="840" y2="266.5" stroke="#bababa" stroke-width="1" stroke-dasharray="5.6 3.4"/>
<line x1="184" y1="316.5" x2="840" y2="316.5" stroke="#bababa" stroke-width="1" stroke-dasharray="5.6 3.4"/>
<line x1="184" y1="366.5" x2="840" y2="366.5" stroke="#bababa" stroke-width="1" stroke-dasharray="5.6 3.4"/>
<line x1="184" y1="416.5" x2="840" y2="416.5" stroke="#bababa" stroke-width="1" stroke-dasharray="5.6 3.4"/>
<line x1="184" y1="466.5" x2="840" y2="466.5" stroke="#bababa" stroke-width="1" stroke-dasharray="5.6 3.4"/>
<line x1="184" y1="516.5" x2="840" y2="516.5" stroke="#bababa" stroke-width="1" stroke-dasharray="5.6 3.4"/>
<line x1="184" y1="566.5" x2="840" y2="566.5" stroke="#bababa" stroke-width="1" stroke-dasharray="5.6 3.4"/>
<line x1="184" y1="616.5" x2="840" y2="616.5" stroke="#bababa" stroke-width="1" stroke-dasharray="5.6 3.4"/>
<line x1="184" y1="666.5" x2="840" y2="666.5" stroke="#bababa" stroke-width="1" stroke-dasharray="5.6 3.4"/>
<path d="M449.5,516.5 L699.5,516.5 L745.89,220.11 Z" fill="#993300" fill-opacity="0.1"/>
<path d="M449.5,516.5 L479.5,516.5 A30,30 0 0 0 470.71,495.29 Z" fill="#006400" fill-opacity="0.1"/>
<path d="M479.5,516.5 A30,30 0 0 0 470.71,495.29" fill="none" stroke="#006400" stroke-width="1.5"/>
<line x1="574.5" y1="151" x2="574.5" y2="680" stroke="#000" stroke-width="1.3"/>
<line x1="184.00" y1="283.99" x2="840.00" y2="386.66" stroke="#000" stroke-width="1.4"/>
<path d="M699.5,516.5 L745.89,220.11 L449.5,516.5" fill="none" stroke="#cc3a14" stroke-width="1.9" stroke-linejoin="round"/>
<path d="M699.5,516.5 L745.89,220.11 L449.5,516.5" fill="none" stroke="#993300" stroke-width="0.9" stroke-linejoin="round"/>
<path d="M449.5,516.5 L699.5,516.5" fill="none" stroke="#993300" stroke-width="1.3"/>
<circle cx="449.50" cy="516.50" r="3.2" fill="#0000ff" stroke="#000" stroke-width="1"/>
<circle cx="699.50" cy="516.50" r="3.2" fill="#7f7fff" stroke="#000" stroke-width="1"/>
<circle cx="745.89" cy="220.11" r="3.2" fill="#4d4d4d" stroke="#000" stroke-width="1"/>
<circle cx="722.70" cy="368.30" r="3.2" fill="#4d4d4d" stroke="#000" stroke-width="1"/>
<circle cx="574.50" cy="516.50" r="3.2" fill="#4d4d4d" stroke="#000" stroke-width="1"/>
<text x="420" y="528.6" font-size="12.5" font-weight="normal" fill="#0000ff" font-family='"Liberation Sans", sans-serif' textLength="8" lengthAdjust="spacingAndGlyphs" >A</text>
<text x="708.6" y="530.7" font-size="12.5" font-weight="normal" fill="#7f7fff" font-family='"Liberation Sans", sans-serif' textLength="6.8" lengthAdjust="spacingAndGlyphs" >B</text>
<text x="735.5" y="207.8" font-size="12.5" font-weight="normal" fill="#333" font-family='"Liberation Sans", sans-serif' textLength="7.5" lengthAdjust="spacingAndGlyphs" >D</text>
<text x="726.6" y="362" font-size="12.5" font-weight="normal" fill="#333" font-family='"Liberation Sans", sans-serif' textLength="7.9" lengthAdjust="spacingAndGlyphs" >G</text>
<text x="578.6" y="510" font-size="12.5" font-weight="normal" fill="#333" font-family='"Liberation Sans", sans-serif' textLength="5.8" lengthAdjust="spacingAndGlyphs" >F</text>
<text x="740.8" y="379.9" font-size="12.5" font-weight="normal" fill="#ff0000" font-family='"Liberation Sans", sans-serif' textLength="32.4" lengthAdjust="spacingAndGlyphs" >a = 6</text>
<text x="575" y="531.7" font-size="12.5" font-weight="normal" fill="#ff0000" font-family='"Liberation Sans", sans-serif' textLength="32" lengthAdjust="spacingAndGlyphs" >d = 5</text>
<text x="480.6" y="506" font-size="12.5" font-weight="normal" fill="#006400" font-family='"Liberation Sans", sans-serif' textLength="47.8" lengthAdjust="spacingAndGlyphs" >α = 45°</text>
</g>
</svg>
</body></html>
